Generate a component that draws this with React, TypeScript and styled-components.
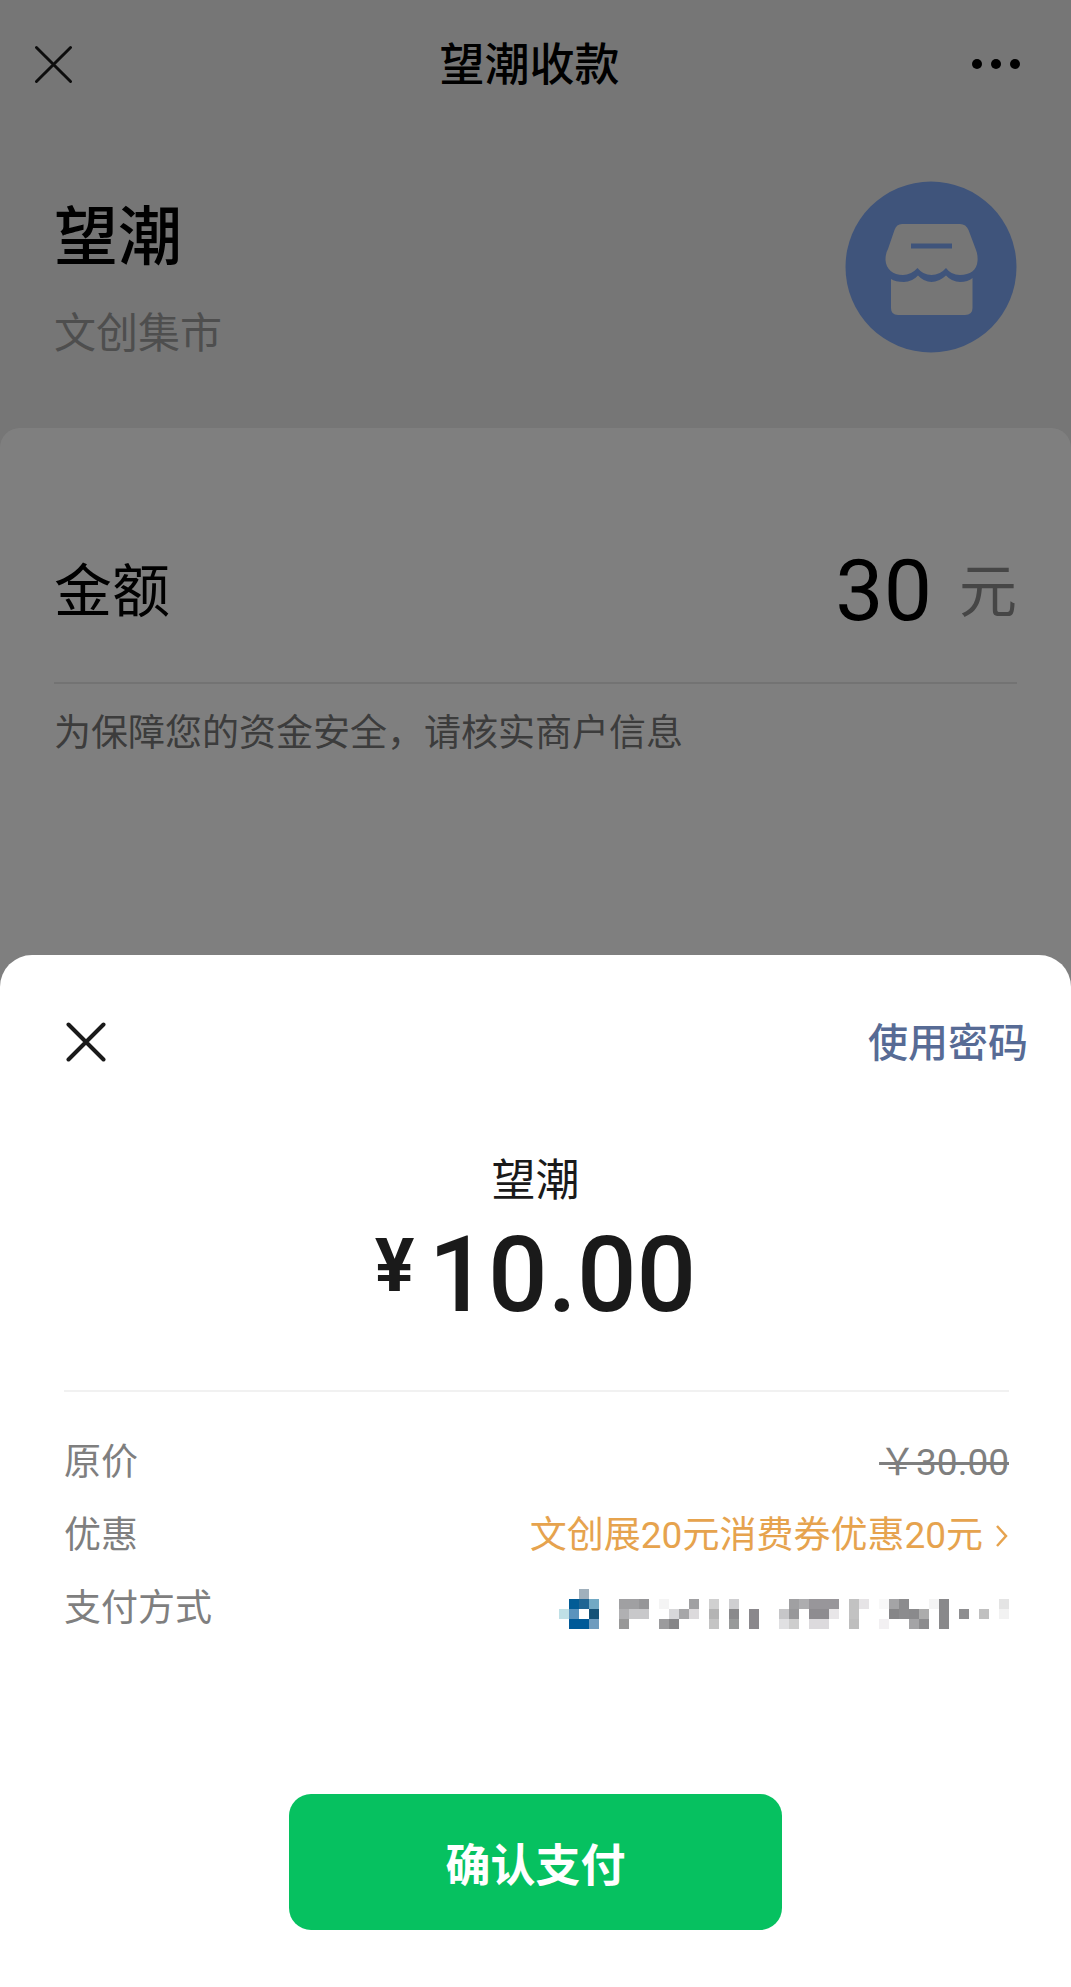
import React from "react";
import styled, { createGlobalStyle } from "styled-components";

const GlobalStyle = createGlobalStyle`
  *, *::before, *::after { box-sizing: border-box; }
  body { margin: 0; background: #fff; }
  h1, h2, p, dl, dt, dd { margin: 0; font-weight: 400; }
  body, button {
    font-family: Roboto, "Noto Sans CJK SC", sans-serif;
  }
`;

const Screen = styled.div`
  position: relative;
  display: flex;
  flex-direction: column;
  min-height: 100vh;
  background: #fff;
  color: #000;
`;

const Page = styled.main`
  display: flex;
  flex-direction: column;
  flex: 1;
  background: #ececec;
`;

const Backdrop = styled.div`
  position: absolute;
  inset: 0;
  background: rgba(0, 0, 0, 0.5);
`;

const PlainButton = styled.button`
  display: inline-flex;
  align-items: center;
  padding: 0;
  border: 0;
  background: none;
  color: inherit;
  cursor: pointer;
`;

const NavBar = styled.header`
  display: grid;
  grid-template-columns: 1fr auto 1fr;
  align-items: center;
  height: 128px;
  padding: 0 50px 0 34px;
`;

const MoreButton = styled(PlainButton)`
  justify-self: end;
`;

const NavTitle = styled.h1`
  padding: 4px 0 0 4px;
  font-size: 45px;
  font-weight: 500;
  line-height: 64px;
`;

const Merchant = styled.section`
  display: flex;
  justify-content: space-between;
  align-items: flex-start;
  padding: 53px 54px 66px;
`;

const MerchantText = styled.div`
  display: grid;
  gap: 28px;
  padding-top: 17px;
`;

const MerchantName = styled.h2`
  font-size: 64px;
  font-weight: 500;
  line-height: 80px;
`;

const MerchantKind = styled.p`
  color: #9c9c9c;
  font-size: 42px;
  line-height: 56px;
`;

const AmountCard = styled.section`
  flex: 1;
  padding: 106px 54px 150px;
  border-radius: 20px 20px 0 0;
  background: #fff;
`;

const AmountRow = styled.div`
  display: flex;
  justify-content: space-between;
  align-items: center;
  padding-bottom: 35px;
  border-bottom: 2px solid #e6e6e6;
  font-size: 58px;
  line-height: 109px;
`;

const AmountLabel = styled.span`
  padding-top: 4px;
`;

const AmountValue = styled.span`
  display: flex;
  align-items: center;
  gap: 27px;
`;

const AmountNumber = styled.span`
  font-size: 86px;
`;

const Unit = styled.span`
  padding-top: 4px;
  color: #8c8c8c;
`;

const Notice = styled.p`
  padding-top: 22px;
  color: #787878;
  font-size: 37px;
  line-height: 56px;
`;

const Sheet = styled.section`
  position: relative;
  display: flex;
  flex-direction: column;
  padding: 57px 0;
  border-radius: 32px 32px 0 0;
  background: #fff;
  color: #1a1a1a;
`;

const SheetBar = styled.div`
  display: flex;
  justify-content: space-between;
  align-items: center;
  padding: 0 43px 0 66px;
`;

const PasswordButton = styled(PlainButton)`
  padding-top: 4px;
  color: #576b95;
  font-size: 40px;
  font-weight: 500;
  line-height: 56px;
`;

const Payee = styled.p`
  padding-top: 79px;
  font-size: 44px;
  line-height: 60px;
  text-align: center;
`;

const Total = styled.p`
  display: flex;
  justify-content: center;
  gap: 14px;
  padding: 5px 0 54px;
  font-size: 105px;
  font-weight: 500;
  line-height: 120px;
`;

const Currency = styled.span`
  font-size: 74px;
  font-weight: 700;
  line-height: 100px;
`;

const Details = styled.dl`
  margin: 0 62px 149px 64px;
  padding-top: 34px;
  border-top: 2px solid #f1f1f1;
  color: #7f7f7f;
  font-size: 37px;
  line-height: 73px;
`;

const DetailRow = styled.div`
  display: flex;
  justify-content: space-between;
  align-items: center;
  height: 73px;
`;

const DetailValue = styled.dd`
  display: flex;
  align-items: center;
`;

const CouponButton = styled(PlainButton)`
  gap: 12px;
  color: #e6a34e;
  font-size: 37px;
  line-height: 73px;
`;

const ConfirmButton = styled.button`
  align-self: center;
  width: 46%;
  height: 136px;
  border: 0;
  border-radius: 22px;
  background: #06c160;
  color: #fff;
  font-size: 45px;
  font-weight: 700;
  cursor: pointer;
`;

function CloseIcon({ size, weight }: { size: number; weight: number }) {
  return (
    <svg width={size} height={size} viewBox="0 0 40 40" fill="none" aria-hidden="true">
      <path d="M2.5 2.5 37.5 37.5M37.5 2.5 2.5 37.5" stroke="#1a1a1a" strokeWidth={weight} strokeLinecap="round" />
    </svg>
  );
}

function MoreIcon() {
  return (
    <svg width="50" height="12" viewBox="0 0 50 12" aria-hidden="true">
      <circle cx="6" cy="6" r="5" />
      <circle cx="25" cy="6" r="5" />
      <circle cx="44" cy="6" r="5" />
    </svg>
  );
}

function StoreIcon() {
  return (
    <svg width="172" height="172" viewBox="0 0 172 172" aria-hidden="true">
      <circle cx="86" cy="86" r="85.5" fill="#7ea8f6" />
      <path
        d="M57 43H115Q121 43 123.500 49L131 69Q133 74 132.500 80C132 89 125 94 115 94Q106 94 101 87Q95 94 86.500 94Q78 94 72.500 87Q66 94 58 94C48 94 41 88 40.500 79Q40.500 72 43 68L49.500 49Q51.500 43 57 43Z"
        fill="#ececec"
      />
      <path d="M66 65H107" stroke="#7ea8f6" strokeWidth="5" />
      <path
        d="M46 98Q50 101 59 101Q67 101 73 94.500Q79 101 86.500 101Q94 101 101 94.500Q107 101 115 101Q123 101 127.500 97V127Q127.500 134 120 134H53Q46 134 46 127Z"
        fill="#ececec"
      />
    </svg>
  );
}

// Each entry is [column, row, colour] on a 10px grid.
const mosaicCells: [number, number, string][] = [
  [2, 0, "#a0b0bc"],
  [1, 1, "#025c96"], [2, 1, "#1f6593"], [3, 1, "#72a9c4"],
  [0, 2, "#bfe0e6"], [1, 2, "#5b93bd"], [3, 2, "#155277"],
  [1, 3, "#005a98"], [2, 3, "#005a98"], [3, 3, "#6f9cbe"],
  [6, 1, "#a0a0a2"], [7, 1, "#a0a0a2"], [8, 1, "#969698"],
  [6, 2, "#b0b0b2"], [7, 2, "#c8c8ca"], [8, 2, "#c8c8ca"], [6, 3, "#989898"],
  [10, 1, "#f4f4f4"], [13, 1, "#a0a0a2"],
  [11, 2, "#d8d8da"], [12, 2, "#a6a6a8"], [13, 2, "#dcdadc"],
  [10, 3, "#9b9b9d"], [11, 3, "#868688"],
  [15, 1, "#d0d0d0"], [15, 2, "#b4b4b4"], [15, 3, "#c4c4c4"],
  [17, 1, "#cfcfd1"], [17, 2, "#8a8a8c"], [17, 3, "#989a9a"],
  [19, 2, "#8a888c"], [19, 3, "#8a888c"],
  [23, 1, "#a0a0a2"], [24, 1, "#adadaf"], [25, 1, "#98969a"], [26, 1, "#98969a"], [27, 1, "#98969a"],
  [22, 2, "#c6c6c8"], [23, 2, "#98989a"], [25, 2, "#8e8c90"], [26, 2, "#8e8c90"], [27, 2, "#e8e6e8"],
  [22, 3, "#e0e0e2"], [23, 3, "#cdcdcd"], [25, 3, "#dcdadd"], [26, 3, "#dcdadd"],
  [29, 1, "#c2c2c2"], [29, 2, "#c2c2c2"], [29, 3, "#bebebe"], [30, 1, "#e6e4e6"],
  [32, 1, "#f8f8f8"], [32, 3, "#f2f0f2"],
  [33, 1, "#a4a4a6"], [34, 1, "#8c8c8e"], [33, 2, "#868688"], [34, 2, "#8c8c8e"],
  [35, 2, "#8a8a8c"], [36, 2, "#acacac"], [35, 3, "#a4a4a6"], [36, 3, "#8c8c8e"],
  [37, 1, "#f4f4f4"], [38, 1, "#89898b"], [38, 2, "#89898b"], [38, 3, "#89898b"],
  [40, 2, "#8e8e90"], [42, 2, "#c0c0c0"], [44, 1, "#e4e4e4"], [44, 2, "#f2f2f2"],
];

function MaskedCard() {
  return (
    <svg width="450" height="40" viewBox="0 0 45 4" shapeRendering="crispEdges" aria-hidden="true">
      {mosaicCells.map(([x, y, fill]) => (
        <rect key={`${x}-${y}`} x={x} y={y} width="1" height="1" fill={fill} />
      ))}
    </svg>
  );
}

function ChevronIcon() {
  return (
    <svg width="14" height="24" viewBox="0 0 14 24" fill="none" aria-hidden="true">
      <path d="M2 2 11 12 2 22" stroke="currentColor" strokeWidth="2.500" />
    </svg>
  );
}

export default function App() {
  return (
    <>
      <GlobalStyle />
      <Screen>
        <Page>
          <NavBar>
            <PlainButton type="button" aria-label="关闭">
              <CloseIcon size={39} weight={3} />
            </PlainButton>
            <NavTitle>望潮收款</NavTitle>
            <MoreButton type="button" aria-label="更多">
              <MoreIcon />
            </MoreButton>
          </NavBar>
          <Merchant>
            <MerchantText>
              <MerchantName>望潮</MerchantName>
              <MerchantKind>文创集市</MerchantKind>
            </MerchantText>
            <StoreIcon />
          </Merchant>
          <AmountCard>
            <AmountRow>
              <AmountLabel>金额</AmountLabel>
              <AmountValue>
                <AmountNumber>30</AmountNumber>
                <Unit>元</Unit>
              </AmountValue>
            </AmountRow>
            <Notice>为保障您的资金安全，请核实商户信息</Notice>
          </AmountCard>
        </Page>
        <Backdrop />
        <Sheet role="dialog" aria-label="确认支付">
          <SheetBar>
            <PlainButton type="button" aria-label="关闭">
              <CloseIcon size={40} weight={4} />
            </PlainButton>
            <PasswordButton type="button">使用密码</PasswordButton>
          </SheetBar>
          <Payee>望潮</Payee>
          <Total>
            <Currency>¥</Currency>
            <span>10.00</span>
          </Total>
          <Details>
            <DetailRow>
              <dt>原价</dt>
              <DetailValue>
                <s>￥30.00</s>
              </DetailValue>
            </DetailRow>
            <DetailRow>
              <dt>优惠</dt>
              <DetailValue>
                <CouponButton type="button">
                  文创展20元消费券优惠20元
                  <ChevronIcon />
                </CouponButton>
              </DetailValue>
            </DetailRow>
            <DetailRow>
              <dt>支付方式</dt>
              <DetailValue>
                <MaskedCard />
              </DetailValue>
            </DetailRow>
          </Details>
          <ConfirmButton type="button">确认支付</ConfirmButton>
        </Sheet>
      </Screen>
    </>
  );
}
